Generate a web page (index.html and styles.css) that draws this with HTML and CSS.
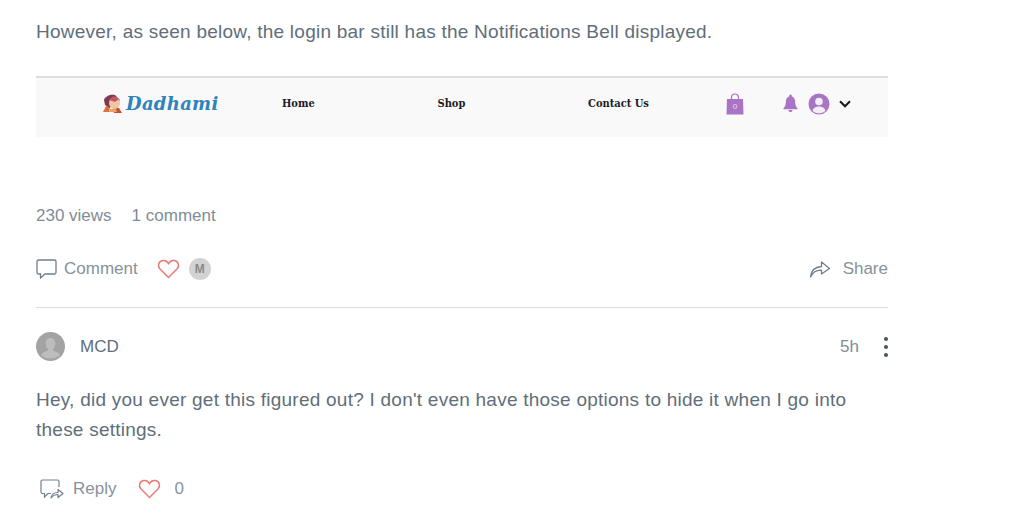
FILE: index.html
```html
<!DOCTYPE html>
<html lang="en">
<head>
    <meta charset="UTF-8">
    <meta name="viewport" content="width=device-width, initial-scale=1.0">
    <title>Forum post</title>
    <link rel="stylesheet" href="styles.css">
</head>
<body>
    <div class="post">
        <p class="post-text">However, as seen below, the login bar still has the Notifications Bell displayed.</p>

        <div class="site-bar">
            <div class="site-logo">
                <svg class="logo-mark" width="21" height="20" viewBox="0 0 21 20">
                    <path d="M1 18l3-6 4 1-1 5z" fill="#d8743a"/>
                    <path d="M11 14l6 0 3 5-8 0z" fill="#c9502e"/>
                    <path d="M2 6c1-4 7-6 11-5l5 5-3 3-5 1-2 4-5-3z" fill="#7c3b52"/>
                    <ellipse cx="12.500" cy="9" rx="5.500" ry="6" fill="#efc6a0"/>
                    <path d="M7 6l5-4 5 3-4 3z" fill="#c8536a"/>
                    <path d="M8 15h6l1 3H7z" fill="#e7a06a"/>
                </svg>
                <span class="logo-name">Dadhami</span>
            </div>
            <span class="nav-link nav-home">Home</span>
            <span class="nav-link nav-shop">Shop</span>
            <span class="nav-link nav-contact">Contact Us</span>
            <svg class="cart-icon" width="18" height="22" viewBox="0 0 18 22">
                <path d="M5.500 6V4.500a3.500 3.500 0 0 1 7 0V6" fill="none" stroke="#a974c4" stroke-width="1.200"/>
                <path d="M1 6h16l.5 15.500H.5z" fill="#a974c4"/>
                <text x="9" y="16" class="cart-count">0</text>
            </svg>
            <svg class="bell-icon" width="15" height="19" viewBox="0 0 16 19">
                <path d="M8 0a1.300 1.300 0 0 1 1.300 1.800C12 2.800 13 5 13 8c0 3 .7 5 2.500 6.500v1H.5v-1C2.300 13 3 11 3 8c0-3 1-5.200 3.700-6.200A1.300 1.300 0 0 1 8 0zM5.800 16.500h4.400a2.200 2.200 0 0 1-4.400 0z" fill="#a974c4"/>
            </svg>
            <svg class="user-icon" width="22" height="22" viewBox="0 0 22 22">
                <circle cx="11" cy="11" r="10.500" fill="#a974c4"/>
                <circle cx="11" cy="8.500" r="3.800" fill="#f3eef6"/>
                <path d="M4.500 18c1-3.500 3.500-4.500 6.500-4.500s5.500 1 6.500 4.500a10 10 0 0 1-13 0z" fill="#f3eef6"/>
            </svg>
            <svg class="chevron-icon" width="12" height="8" viewBox="0 0 12 8">
                <path d="M1 1.300l5 5 5-5" fill="none" stroke="#1a1a1a" stroke-width="2"/>
            </svg>
        </div>

        <div class="post-stats">
            <span>230 views</span>
            <span>1 comment</span>
        </div>

        <div class="post-actions">
            <svg class="comment-icon" width="21" height="20" viewBox="0 0 21 20">
                <path d="M2.500 1h16a1.500 1.500 0 0 1 1.500 1.500v11a1.500 1.500 0 0 1-1.500 1.500H9l-4.500 4v-4h-2A1.500 1.500 0 0 1 1 13.500v-11A1.500 1.500 0 0 1 2.500 1z" fill="none" stroke="#6f7f8c" stroke-width="1.300"/>
            </svg>
            <span class="action-label">Comment</span>
            <svg class="heart-icon" width="23" height="20" viewBox="0 0 23 20">
                <path d="M11.500 18.500L2.800 9.800C.4 7.300 1.400 2.300 5.600 1.600c2.500-.4 4.600.8 5.900 3 1.300-2.200 3.400-3.400 5.900-3 4.200.7 5.200 5.700 2.800 8.200z" fill="none" stroke="#ea7a76" stroke-width="1.500"/>
            </svg>
            <span class="liker-badge">M</span>
            <div class="share">
                <svg width="22" height="18" viewBox="0 0 22 18">
                    <path d="M1.500 17c.5-6 4.500-10 11-10.500V2l8 6.500-8 5.500v-3.800C8 10 4 12 1.500 17z" fill="none" stroke="#6f7f8c" stroke-width="1.300" stroke-linejoin="round"/>
                </svg>
                <span class="action-label">Share</span>
            </div>
        </div>

        <div class="comment">
            <div class="comment-head">
                <svg class="avatar" width="29" height="29" viewBox="0 0 29 29">
                    <circle cx="14.500" cy="14.500" r="14.500" fill="#a3a3a3"/>
                    <path d="M14.500 6c3 0 4.800 2.300 4.800 5.500 0 2.300-1 4.300-2.300 5.400v1.500c2.800 1 6 2 7 4.500a14.500 14.500 0 0 1-19 0c1-2.500 4.200-3.500 7-4.500v-1.500c-1.300-1.100-2.300-3.100-2.300-5.400C9.700 8.300 11.500 6 14.500 6z" fill="#bdbdbd"/>
                </svg>
                <span class="comment-author">MCD</span>
                <span class="comment-time">5h</span>
                <div class="more-menu"><i></i><i></i><i></i></div>
            </div>
            <p class="comment-text">Hey, did you ever get this figured out? I don't even have those options to hide it when I go into these settings.</p>
            <div class="comment-actions">
                <svg class="reply-icon" width="24" height="20" viewBox="0 0 24 20">
                    <path d="M11 14.500H8l-3.500 3.500v-3.500H2.500A1.500 1.500 0 0 1 1 13V2.500A1.500 1.500 0 0 1 2.500 1h15A1.500 1.500 0 0 1 19 2.500V8" fill="none" stroke="#6f7f8c" stroke-width="1.200"/>
                    <path d="M11 19c.5-3.500 3-5.500 7-5.500V10.500l5 4-5 4v-3c-3 0-5 1-7 3.500z" fill="#fff" stroke="#6f7f8c" stroke-width="1.200" stroke-linejoin="round"/>
                </svg>
                <span class="action-label">Reply</span>
                <svg class="heart-icon small" width="23" height="20" viewBox="0 0 23 20">
                    <path d="M11.500 18.500L2.800 9.800C.4 7.300 1.400 2.300 5.600 1.600c2.500-.4 4.600.8 5.900 3 1.300-2.200 3.400-3.400 5.900-3 4.200.7 5.200 5.700 2.800 8.200z" fill="none" stroke="#ea7a76" stroke-width="1.500"/>
                </svg>
                <span class="action-label">0</span>
            </div>
        </div>
    </div>
</body>
</html>
```

FILE: styles.css
```css
body {
    margin: 0;
    background-color: #fff;
    font-family: "Liberation Sans", Arial, sans-serif;
    color: #5b6b78;
}
.post {
    width: 852px;
    margin-left: 36px;
    padding-top: 20px;
}
.post-text {
    margin: 0;
    font-size: 19px;
    letter-spacing: .24px;
    line-height: 23px;
    color: #5f6e7a;
}

/* screenshot of the site header inside the post */
.site-bar {
    display: flex;
    align-items: center;
    height: 51px;
    margin-top: 33px;
    padding-bottom: 8px;
    background-color: #f9f9f9;
    border-top: 2px solid #dedede;
}
.site-logo {
    display: flex;
    align-items: center;
    margin-left: 66px;
    width: 180px;
}
.logo-mark {
    flex: none;
    margin-right: 3px;
}
.logo-name {
    font-family: "DejaVu Serif", serif;
    font-size: 18px;
    letter-spacing: .3px;
    font-weight: bold;
    font-style: italic;
    color: #2d84bd;
}
.nav-link {
    font-family: "DejaVu Serif", serif;
    font-stretch: condensed;
    font-size: 11px;
    font-weight: bold;
    color: #1c1c24;
}
.nav-home {
    width: 155.500px;
}
.nav-shop {
    width: 150.500px;
}
.nav-contact {
    width: 137.500px;
}
.cart-icon {
    flex: none;
}
.cart-count {
    font-size: 8px;
    fill: #e8dcef;
    text-anchor: middle;
}
.bell-icon {
    flex: none;
    margin-left: 39px;
}
.user-icon {
    flex: none;
    margin-left: 10px;
}
.chevron-icon {
    flex: none;
    margin-left: 9px;
}

.post-stats {
    display: flex;
    gap: 20px;
    margin-top: 69px;
    font-size: 17px;
    line-height: 20px;
    color: #808c96;
}
.post-actions {
    display: flex;
    align-items: center;
    margin-top: 33px;
    height: 20px;
    padding-bottom: 28px;
    border-bottom: 1px solid #dcdcdc;
}
.action-label {
    font-size: 17px;
    color: #87929b;
}
.comment-icon {
    flex: none;
    margin-right: 7px;
}
.heart-icon {
    flex: none;
    margin-left: 19px;
    margin-right: 9px;
}
.liker-badge {
    display: flex;
    align-items: center;
    justify-content: center;
    width: 22px;
    height: 22px;
    border-radius: 50%;
    background-color: #d2d2d2;
    font-size: 12px;
    font-weight: bold;
    color: #8a8a8a;
}
.share {
    display: flex;
    align-items: center;
    gap: 12px;
    margin-left: auto;
}

.comment-head {
    display: flex;
    align-items: center;
    margin-top: 24px;
}
.avatar {
    flex: none;
}
.comment-author {
    margin-left: 15px;
    font-size: 17px;
    color: #5f6e7a;
}
.comment-time {
    margin-left: auto;
    font-size: 17px;
    color: #808c96;
}
.more-menu {
    display: flex;
    flex-direction: column;
    gap: 4px;
    margin-left: 25px;
}
.more-menu i {
    display: block;
    width: 4px;
    height: 4px;
    border-radius: 50%;
    background-color: #47525c;
}
.comment-text {
    margin: 24px 0 0;
    font-size: 19px;
    letter-spacing: .24px;
    line-height: 29.500px;
    color: #5f6e7a;
}
.comment-actions {
    display: flex;
    align-items: center;
    margin-top: 35px;
    padding-left: 4px;
}
.reply-icon {
    flex: none;
    margin-right: 9px;
}
.heart-icon.small {
    margin-left: 22px;
    margin-right: 13px;
}
```
